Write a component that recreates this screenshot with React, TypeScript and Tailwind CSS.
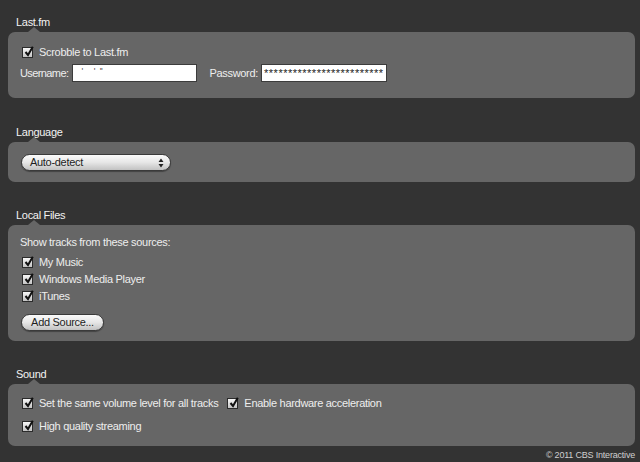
import React from "react";

const font = { fontFamily: '"Liberation Sans", Arial, sans-serif' };

const Check = () => (
  <span className="relative inline-block w-[11px] h-[11px] shrink-0 border border-[#2b2b2b] bg-gradient-to-b from-[#f7f7f7] to-[#c4c4c4]">
    <svg
      className="absolute left-[1px] -top-[2px]"
      width="10"
      height="11"
      viewBox="0 0 10 11"
    >
      <path d="M1.5 6 L4 9 L8.8 0.8" fill="none" stroke="#111" strokeWidth="2" />
    </svg>
  </span>
);

const CheckRow = ({ label }: { label: string }) => (
  <div className="flex items-center h-[17px] ml-[2px]">
    <Check />
    <span className="ml-[6px]">{label}</span>
  </div>
);

const Section = ({
  title,
  children,
  className,
}: {
  title: string;
  children: React.ReactNode;
  className: string;
}) => (
  <div>
    <div className="h-[20px] leading-[20px] pl-[8px] text-[#f2f2f2]">{title}</div>
    <div className={"relative rounded-[7px] bg-[#666666] pl-[12px] " + className}>
      <span className="absolute left-[20px] -top-[5px] w-0 h-0 border-l-[6px] border-r-[6px] border-b-[5px] border-l-transparent border-r-transparent border-b-[#666666]" />
      {children}
    </div>
  </div>
);

const Pill = ({ children, className }: { children: React.ReactNode; className: string }) => (
  <div
    className={
      "flex items-center h-[17px] rounded-full border border-[#3a3a3a] bg-gradient-to-b from-[#fbfbfb] via-[#e6e6e6] to-[#c2c2c2] text-[#1e1e1e] shadow-[0_1px_1px_rgba(0,0,0,0.35)] " +
      className
    }
  >
    {children}
  </div>
);

export default function App() {
  return (
    <div
      className="w-[640px] h-[462px] overflow-hidden bg-[#333333] pl-[8px] pr-[5px] pt-[12px] text-[11px] tracking-[-0.3px] text-[#eeeeee]"
      style={font}
    >
      <Section title="Last.fm" className="h-[66px] pt-[12px]">
        <CheckRow label="Scrobble to Last.fm" />
        <div className="flex items-center h-[18px] mt-[3px]">
          <span className="tracking-[-0.6px]">Username:</span>
          <div className="ml-[4px] w-[125px] h-[18px] bg-white border border-[#3c3c3c] text-[#555] leading-[12px] whitespace-pre pl-[8px] text-[9px]">
            {"'     '  ''"}
          </div>
          <span className="ml-[12px]">Password:</span>
          <div className="ml-[3px] w-[126px] h-[18px] bg-white border border-[#3c3c3c] text-[#222] leading-[16px] pl-[2px] tracking-[0.5px] overflow-hidden">
            {"*************************"}
          </div>
        </div>
      </Section>

      <div className="mt-[24px]">
        <Section title="Language" className="h-[40px] pt-[12px]">
          <Pill className="w-[150px] ml-[1px] pl-[8px] pr-[6px] justify-between">
            <span>Auto-detect</span>
            <svg width="6" height="10" viewBox="0 0 6 10">
              <path d="M3 0.5 L5.5 4 L0.5 4 Z M0.5 6 L5.5 6 L3 9.5 Z" fill="#222" />
            </svg>
          </Pill>
        </Section>
      </div>

      <div className="mt-[23px]">
        <Section title="Local Files" className="h-[116px] pt-[9px]">
          <div className="h-[17px] leading-[17px]">Show tracks from these sources:</div>
          <div className="mt-[3px]">
            <CheckRow label="My Music" />
            <CheckRow label="Windows Media Player" />
            <CheckRow label="iTunes" />
          </div>
          <Pill className="w-[83px] ml-[1px] mt-[9px] justify-center">
            <span>Add Source...</span>
          </Pill>
        </Section>
      </div>

      <div className="mt-[23px]">
        <Section title="Sound" className="h-[62px] pt-[11px]">
          <div className="flex">
            <CheckRow label="Set the same volume level for all tracks" />
            <div className="ml-[7px]">
              <CheckRow label="Enable hardware acceleration" />
            </div>
          </div>
          <div className="mt-[6px]">
            <CheckRow label="High quality streaming" />
          </div>
        </Section>
      </div>

      <div className="mt-[2px] h-[14px] leading-[14px] text-right text-[9px] tracking-[-0.2px] text-[#cfcfcf]">
        © 2011 CBS Interactive
      </div>
    </div>
  );
}
